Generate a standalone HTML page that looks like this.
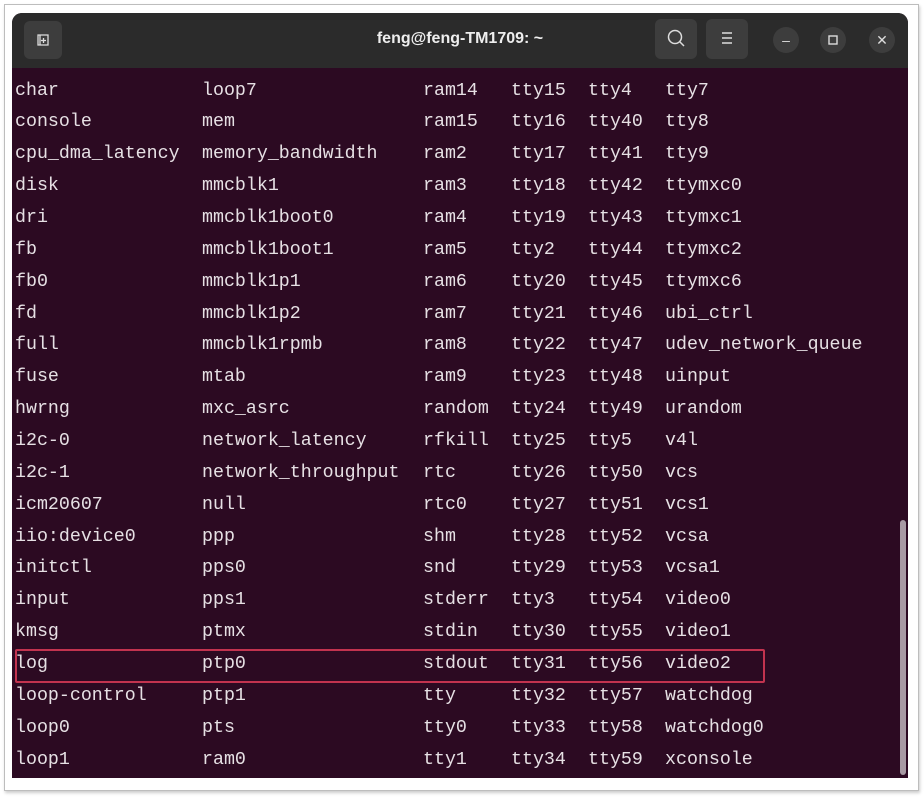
<!DOCTYPE html>
<html><head><style>
body{margin:0;width:924px;height:797px;background:#fff;position:relative;overflow:hidden;font-family:"Liberation Sans",sans-serif}
.frame{position:absolute;left:4px;top:4px;width:913px;height:785px;border:1px solid #bdbdbd;box-shadow:1px 2px 3px #ccc;background:#fff}
.win{position:absolute;left:12px;top:13px;width:896px;height:765px;background:#2c0a22;border-radius:10px 10px 0 0;overflow:hidden}
.tb{position:absolute;left:0;top:0;width:896px;height:55px;background:#2b2b2b}
.btn{position:absolute;background:#3d3d3d;border-radius:6px;color:#ddd;text-align:center}
.cir{position:absolute;width:26px;height:26px;border-radius:50%;background:#3d3d3d;color:#ddd;text-align:center;line-height:26px;font-size:14px;top:14px}
.title{position:absolute;left:0;width:896px;top:17px;text-align:center;color:#eee;font-weight:bold;font-size:16px}
.row{position:absolute;left:0;height:32px;font-family:"Liberation Mono",monospace;font-size:18.3px;color:#e6e0e4;white-space:pre}
.row span{position:absolute;top:0}
.sb{position:absolute;left:888px;top:507px;width:6px;height:255px;background:#a89aa4;border-radius:3px}
.hl{position:absolute;left:15px;top:649px;width:750px;height:34px;border:2px solid #c2334f;box-sizing:border-box;border-radius:2px}
</style></head><body>
<div class="frame"></div>
<div class="win">
<div class="tb">
<div class="btn" style="left:12px;top:8px;width:38px;height:38px"><svg width="38" height="38"><path d="M14 14h10v10h-10z M16 14v10" fill="none" stroke="#ddd" stroke-width="1.3"/><path d="M19.5 17v5M17 19.5h5" stroke="#ddd" stroke-width="1.3"/></svg></div>
<div class="title">feng@feng-TM1709: ~</div>
<div class="btn" style="left:643px;top:6px;width:42px;height:40px"><svg width="42" height="40"><circle cx="20" cy="18" r="6.5" fill="none" stroke="#ddd" stroke-width="1.5"/><path d="M25 23l4 4" stroke="#ddd" stroke-width="1.5"/></svg></div>
<div class="btn" style="left:694px;top:6px;width:42px;height:40px"><svg width="42" height="40"><path d="M16 14h10M16 19h10M16 24h10" stroke="#ddd" stroke-width="1.4"/></svg></div>
<div class="cir" style="left:761px">–</div>
<div class="cir" style="left:808px"><svg width="26" height="26"><rect x="9" y="9" width="8" height="8" fill="none" stroke="#ddd" stroke-width="1.4"/></svg></div>
<div class="cir" style="left:857px">✕</div>
</div>
<div class="sb"></div>
</div>
<div class="hl"></div>
<div id="rows"></div>
<script>
var d=`char loop7 ram14 tty15 tty4 tty7
console mem ram15 tty16 tty40 tty8
cpu_dma_latency memory_bandwidth ram2 tty17 tty41 tty9
disk mmcblk1 ram3 tty18 tty42 ttymxc0
dri mmcblk1boot0 ram4 tty19 tty43 ttymxc1
fb mmcblk1boot1 ram5 tty2 tty44 ttymxc2
fb0 mmcblk1p1 ram6 tty20 tty45 ttymxc6
fd mmcblk1p2 ram7 tty21 tty46 ubi_ctrl
full mmcblk1rpmb ram8 tty22 tty47 udev_network_queue
fuse mtab ram9 tty23 tty48 uinput
hwrng mxc_asrc random tty24 tty49 urandom
i2c-0 network_latency rfkill tty25 tty5 v4l
i2c-1 network_throughput rtc tty26 tty50 vcs
icm20607 null rtc0 tty27 tty51 vcs1
iio:device0 ppp shm tty28 tty52 vcsa
initctl pps0 snd tty29 tty53 vcsa1
input pps1 stderr tty3 tty54 video0
kmsg ptmx stdin tty30 tty55 video1
log ptp0 stdout tty31 tty56 video2
loop-control ptp1 tty tty32 tty57 watchdog
loop0 pts tty0 tty33 tty58 watchdog0
loop1 ram0 tty1 tty34 tty59 xconsole`.split("\n");
var xs=[15,202,423,511,588,665],h="";
d.forEach(function(l,i){var t=l.split(" ");h+='<div class="row" style="top:'+(80.5+i*31.86)+'px">';t.forEach(function(w,j){h+='<span style="left:'+xs[j]+'px">'+w+'</span>'});h+='</div>'});
document.getElementById("rows").innerHTML=h;
</script>
</body></html>
